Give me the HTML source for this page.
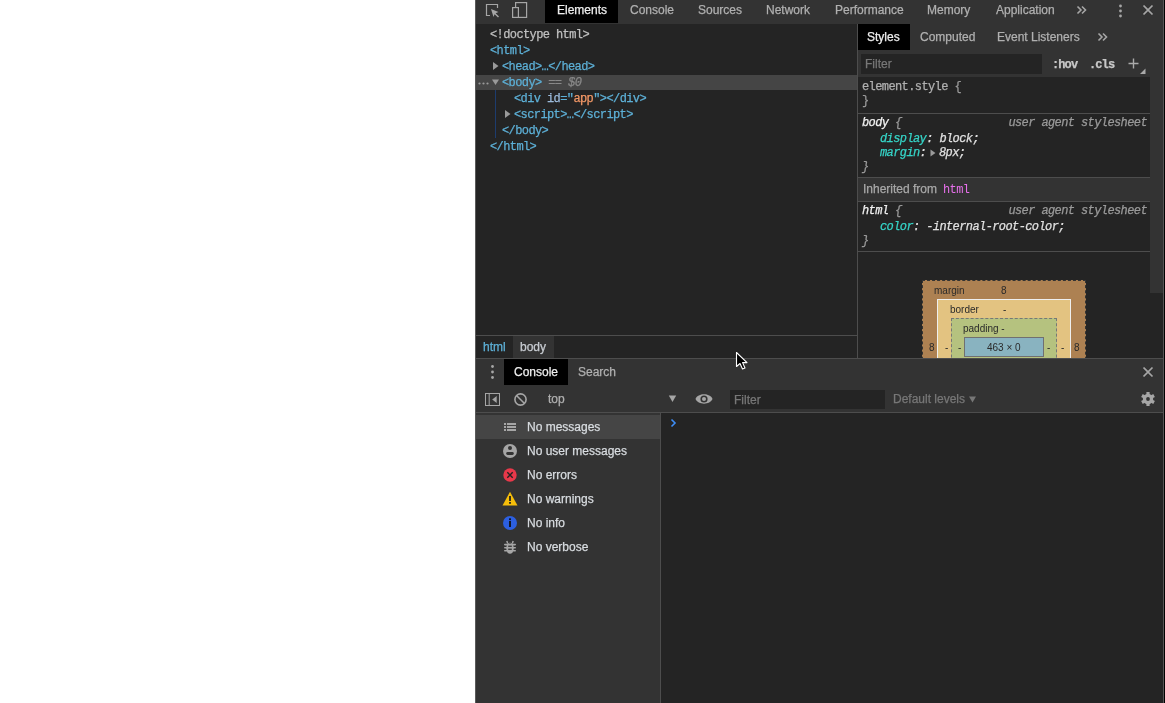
<!DOCTYPE html>
<html><head><meta charset="utf-8">
<style>
*{box-sizing:border-box;margin:0;padding:0}
html,body{width:1165px;height:703px;overflow:hidden;background:#fff;font-family:"Liberation Sans",sans-serif;font-size:12px}
div{position:absolute}
span{position:static}
#w{-webkit-text-stroke-width:0.25px}
.bg{background:#242424}
.tb{background:#333}
.ln{background:#4d4d4d}
.t{white-space:pre;line-height:14px;height:14px}
.tab{color:#b0b0b0;white-space:pre;line-height:14px}
.sel{background:#000}
.mono{font-family:"Liberation Mono",monospace;font-size:12px;letter-spacing:-0.6px}
.tag{color:#5db0d7}
.an{color:#9bbbdc}
.av{color:#f29766}
.gr{color:#c0c0c0}
.it{font-style:italic}
.pn{color:#35d4c7}
.pv{color:#e0e0e0}
.brace{color:#9a9a9a}
.ua{color:#9a9a9a;font-style:italic}
.bm{font-size:10px;color:#2a2a2a;line-height:12px;white-space:pre;-webkit-text-stroke-width:0}
</style></head><body>
<div id="w" style="left:0;top:0;width:1165px;height:703px;will-change:transform">
<!-- devtools container -->
<div style="left:475px;top:0;width:1px;height:703px;background:#5a5a5a"></div>
<div class="bg" style="left:476px;top:0;width:689px;height:703px"></div>

<!-- ===== main toolbar ===== -->
<div class="tb" style="left:476px;top:0;width:689px;height:24px"></div>
<svg style="position:absolute;left:476px;top:0" width="60" height="24">
  <path d="M14,15.5 H10.5 V4.5 H21.5 V8" fill="none" stroke="#a6a6a6" stroke-width="1.2"/>
  <path d="M15,9 L22.5,12 L19.6,13.3 L23,16.5 L22,17.5 L18.6,14.2 L17.5,17 Z" fill="#a6a6a6"/>
  <rect x="39.6" y="2.6" width="11" height="14.8" fill="none" stroke="#a6a6a6" stroke-width="1.2"/>
  <rect x="36.6" y="7.6" width="5.8" height="9.8" fill="#333" stroke="#a6a6a6" stroke-width="1.2"/>
</svg>
<div class="sel" style="left:545px;top:0;width:73px;height:23px"></div>
<div class="tab" style="left:557px;top:3px;color:#eee">Elements</div>
<div class="tab" style="left:630px;top:3px">Console</div>
<div class="tab" style="left:698px;top:3px">Sources</div>
<div class="tab" style="left:766px;top:3px">Network</div>
<div class="tab" style="left:835px;top:3px">Performance</div>
<div class="tab" style="left:927px;top:3px">Memory</div>
<div class="tab" style="left:996px;top:3px">Application</div>
<svg style="position:absolute;left:1074px;top:3px" width="16" height="16"><path d="M3.5,3.5 L7,7 L3.5,10.5 M8,3.5 L11.5,7 L8,10.5" fill="none" stroke="#a6a6a6" stroke-width="1.6"/></svg>
<svg style="position:absolute;left:1110px;top:0" width="55" height="24">
  <circle cx="10.5" cy="6" r="1.4" fill="#a6a6a6"/><circle cx="10.5" cy="11" r="1.4" fill="#a6a6a6"/><circle cx="10.5" cy="16" r="1.4" fill="#a6a6a6"/>
  <path d="M33.5,5.5 L42.5,14.5 M42.5,5.5 L33.5,14.5" stroke="#a6a6a6" stroke-width="1.7"/>
</svg>

<!-- ===== elements panel ===== -->
<div class="mono" style="left:476px;top:24px;width:381px;height:311px">
  <div style="left:0;top:51px;width:381px;height:15px;background:#454545"></div>
  <div class="t gr" style="left:14px;top:4px">&lt;!doctype html&gt;</div>
  <div class="t tag" style="left:14px;top:20px">&lt;html&gt;</div>
  <div class="t tag" style="left:26px;top:36px">&lt;head&gt;…&lt;/head&gt;</div>
  <div class="t tag" style="left:26px;top:52px">&lt;body&gt; <span style="color:#8a8a8a">== <i>$0</i></span></div>
  <div class="t tag" style="left:38px;top:68px">&lt;div <span class="an">id</span>="<span class="av">app</span>"&gt;&lt;/div&gt;</div>
  <div class="t tag" style="left:38px;top:84px">&lt;script&gt;…&lt;/script&gt;</div>
  <div class="t tag" style="left:26px;top:100px">&lt;/body&gt;</div>
  <div class="t tag" style="left:14px;top:116px">&lt;/html&gt;</div>
  <div style="left:19px;top:66px;width:1px;height:48px;background:#1d3c6e"></div>
  <svg style="position:absolute;left:0;top:0" width="40" height="120">
    <path d="M17,38 L22.5,42 L17,46 Z" fill="#9a9a9a"/>
    <path d="M16,55.5 L23,55.5 L19.5,61 Z" fill="#9a9a9a"/>
    <path d="M29,86 L34.5,90 L29,94 Z" fill="#9a9a9a"/>
    <circle cx="3.5" cy="59.5" r="1.1" fill="#9a9a9a"/><circle cx="7.5" cy="59.5" r="1.1" fill="#9a9a9a"/><circle cx="11.5" cy="59.5" r="1.1" fill="#9a9a9a"/>
  </svg>
</div>

<!-- breadcrumbs -->
<div class="ln" style="left:476px;top:335px;width:381px;height:1px"></div>
<div style="left:513px;top:336px;width:41px;height:22px;background:#333"></div>
<div class="t" style="left:483px;top:340px;color:#5db0d7">html</div>
<div class="t" style="left:520px;top:340px;color:#c8ccd2">body</div>

<!-- vertical divider -->
<div class="ln" style="left:857px;top:24px;width:1px;height:334px"></div>

<!-- ===== styles sidebar ===== -->
<div class="tb" style="left:858px;top:24px;width:307px;height:53px"></div>
<div class="sel" style="left:858px;top:24px;width:52px;height:26px"></div>
<div class="tab" style="left:867px;top:30px;color:#eee">Styles</div>
<div class="tab" style="left:920px;top:30px">Computed</div>
<div class="tab" style="left:997px;top:30px">Event Listeners</div>
<svg style="position:absolute;left:1095px;top:30px" width="16" height="16"><path d="M3.5,3.5 L7,7 L3.5,10.5 M8,3.5 L11.5,7 L8,10.5" fill="none" stroke="#a6a6a6" stroke-width="1.6"/></svg>
<div style="left:861px;top:54px;width:181px;height:20px;background:#242424"></div>
<div class="t" style="left:865px;top:57px;color:#777">Filter</div>
<div class="t mono" style="left:1052px;top:58px;color:#c8c8c8;font-weight:bold;font-size:12px;letter-spacing:-0.9px">:hov</div>
<div class="t mono" style="left:1089px;top:58px;color:#c8c8c8;font-weight:bold;font-size:12px;letter-spacing:-0.9px">.cls</div>
<svg style="position:absolute;left:1124px;top:54px" width="26" height="22">
  <path d="M9.5,4.5 V14.5 M4.5,9.5 H14.5" stroke="#aaa" stroke-width="1.4"/>
  <path d="M21.5,20 L21.5,14.5 L16,20 Z" fill="#aaa"/>
</svg>

<!-- scrollbar -->
<div style="left:1150px;top:77px;width:13px;height:216px;background:#333"></div>


<!-- section element.style -->
<div class="mono" style="left:858px;top:77px;width:292px;height:200px">
  <div class="t" style="left:4px;top:3px;color:#b0b0b0">element.style <span class="brace">{</span></div>
  <div class="t brace" style="left:4px;top:17px">}</div>
</div>
<div class="ln" style="left:858px;top:113px;width:292px;height:1px"></div>
<div class="mono" style="left:858px;top:114px;width:292px;height:63px">
  <div class="t" style="left:4px;top:2px;color:#f0f0f0;font-style:italic">body <span class="brace">{</span></div>
  <div class="t ua" style="right:3px;top:2px">user agent stylesheet</div>
  <div class="t it" style="left:22px;top:18px"><span class="pn">display</span><span class="pv">: block;</span></div>
  <div class="t it" style="left:22px;top:32px"><span class="pn">margin</span><span class="pv">:</span></div>
  <div class="t brace it" style="left:4px;top:46px">}</div>
  <svg style="position:absolute;left:72px;top:34px" width="8" height="10"><path d="M0.5,1.5 L5.5,5 L0.5,8.5 Z" fill="#9a9a9a"/></svg>
  <div class="t it pv" style="left:81px;top:32px">8px;</div>
</div>
<div class="ln" style="left:858px;top:177px;width:292px;height:1px"></div>
<div class="tb" style="left:858px;top:178px;width:292px;height:23px"></div>
<div class="t" style="left:863px;top:182px;color:#a8a8a8">Inherited from</div>
<div class="t mono" style="left:943px;top:183px;color:#e870ec;-webkit-text-stroke-width:0">html</div>
<div class="ln" style="left:858px;top:201px;width:292px;height:1px"></div>
<div class="mono" style="left:858px;top:202px;width:292px;height:49px">
  <div class="t" style="left:4px;top:2px;color:#f0f0f0;font-style:italic">html <span class="brace">{</span></div>
  <div class="t ua" style="right:3px;top:2px">user agent stylesheet</div>
  <div class="t it" style="left:22px;top:18px"><span class="pn">color</span><span class="pv">: -internal-root-color;</span></div>
  <div class="t brace it" style="left:4px;top:32px">}</div>
</div>
<div class="ln" style="left:858px;top:251px;width:292px;height:1px"></div>

<!-- box model -->
<div style="left:922px;top:280px;width:164px;height:90px;background:#ad8152;border:1px dashed #333"></div>
<div style="left:937px;top:299px;width:134px;height:70px;background:#e3c381;border:1px solid #eee"></div>
<div style="left:951px;top:318px;width:106px;height:50px;background:#b5c27f;border:1px dashed #777"></div>
<div style="left:964px;top:337px;width:80px;height:20px;background:#89b3c0;border:1px solid #707070"></div>
<div class="bm" style="left:934px;top:285px">margin</div>
<div class="bm" style="left:1001px;top:285px">8</div>
<div class="bm" style="left:950px;top:304px">border</div>
<div class="bm" style="left:1003px;top:304px">-</div>
<div class="bm" style="left:963px;top:323px">padding -</div>
<div class="bm" style="left:987px;top:342px">463 × 0</div>
<div class="bm" style="left:929px;top:342px">8</div>
<div class="bm" style="left:945px;top:342px">-</div>
<div class="bm" style="left:958px;top:342px">-</div>
<div class="bm" style="left:1047px;top:342px">-</div>
<div class="bm" style="left:1061px;top:342px">-</div>
<div class="bm" style="left:1074px;top:342px">8</div>

<!-- ===== drawer ===== -->
<div class="tb" style="left:476px;top:358px;width:689px;height:54px"></div>
<div class="ln" style="left:476px;top:358px;width:689px;height:1px"></div>
<svg style="position:absolute;left:476px;top:359px" width="30" height="26">
  <circle cx="16.5" cy="7.5" r="1.4" fill="#a6a6a6"/><circle cx="16.5" cy="13" r="1.4" fill="#a6a6a6"/><circle cx="16.5" cy="18.5" r="1.4" fill="#a6a6a6"/>
</svg>
<div class="sel" style="left:504px;top:359px;width:64px;height:26px"></div>
<div class="tab" style="left:514px;top:365px;color:#eee">Console</div>
<div class="tab" style="left:578px;top:365px">Search</div>
<svg style="position:absolute;left:1135px;top:359px" width="30" height="26">
  <path d="M8.5,8.5 L17.5,17.5 M17.5,8.5 L8.5,17.5" stroke="#a6a6a6" stroke-width="1.7"/>
</svg>

<!-- console toolbar -->

<svg style="position:absolute;left:476px;top:386px" width="200" height="26">
  <rect x="9.5" y="7.5" width="14" height="12" fill="none" stroke="#a6a6a6" stroke-width="1"/>
  <path d="M13.2,7.5 V19.5" stroke="#a6a6a6" stroke-width="1"/>
  <path d="M20.7,10 L20.7,17 L16.2,13.5 Z" fill="#a6a6a6"/>
  <circle cx="44.5" cy="13.5" r="5.6" fill="none" stroke="#a6a6a6" stroke-width="1.6"/>
  <path d="M40.5,9.5 L48.5,17.5" stroke="#a6a6a6" stroke-width="1.6"/>
</svg>
<div class="tab" style="left:548px;top:392px">top</div>
<svg style="position:absolute;left:668px;top:394px" width="10" height="10"><path d="M0.8,1.5 L8.2,1.5 L4.5,8 Z" fill="#a6a6a6"/></svg>
<svg style="position:absolute;left:694px;top:390px" width="22" height="18">
  <path d="M1.5,9 C4,2.8 16,2.8 18.5,9 C16,15.2 4,15.2 1.5,9 Z" fill="#a6a6a6"/>
  <circle cx="10" cy="9" r="3.6" fill="#333"/><circle cx="10" cy="9" r="2" fill="#a6a6a6"/>
</svg>
<div style="left:730px;top:390px;width:155px;height:19px;background:#242424"></div>
<div class="t" style="left:734px;top:393px;color:#777">Filter</div>
<div class="t" style="left:893px;top:392px;color:#777">Default levels</div>
<svg style="position:absolute;left:968px;top:395px" width="10" height="10"><path d="M1,1.5 L8,1.5 L4.5,7.5 Z" fill="#777"/></svg>
<svg style="position:absolute;left:1136px;top:387px" width="24" height="24"><g fill="#a6a6a6"><rect x="10.4" y="5" width="3.2" height="14" transform="rotate(0 12 12)"/><rect x="10.4" y="5" width="3.2" height="14" transform="rotate(60 12 12)"/><rect x="10.4" y="5" width="3.2" height="14" transform="rotate(120 12 12)"/><circle cx="12" cy="12" r="5.2"/></g><circle cx="12" cy="12" r="1.9" fill="#333"/></svg>
<div class="ln" style="left:476px;top:412px;width:689px;height:1px"></div>

<!-- console sidebar -->
<div class="tb" style="left:476px;top:413px;width:184px;height:290px"></div>
<div class="ln" style="left:660px;top:413px;width:1px;height:290px"></div>
<div style="left:476px;top:415px;width:184px;height:24px;background:#454545"></div>
<div class="t" style="left:527px;top:420px;color:#d8dce0">No messages</div>
<div class="t" style="left:527px;top:444px;color:#d8dce0">No user messages</div>
<div class="t" style="left:527px;top:468px;color:#d8dce0">No errors</div>
<div class="t" style="left:527px;top:492px;color:#d8dce0">No warnings</div>
<div class="t" style="left:527px;top:516px;color:#d8dce0">No info</div>
<div class="t" style="left:527px;top:540px;color:#d8dce0">No verbose</div>
<svg style="position:absolute;left:500px;top:415px" width="22" height="144">
  <!-- list -->
  <g fill="#a6a6a6"><rect x="4" y="8" width="2" height="2"/><rect x="7" y="8" width="9" height="2"/>
  <rect x="4" y="11" width="2" height="2"/><rect x="7" y="11" width="9" height="2"/>
  <rect x="4" y="14" width="2" height="2"/><rect x="7" y="14" width="9" height="2"/></g>
  <!-- user -->
  <circle cx="10" cy="36" r="7" fill="#a6a6a6"/>
  <circle cx="10" cy="33.1" r="2" fill="#333"/>
  <rect x="6.2" y="37.1" width="7.6" height="2.8" rx="1.4" fill="#333"/>
  <!-- error -->
  <circle cx="10" cy="60" r="6.7" fill="#e8384a"/>
  <path d="M7.3,57.3 L12.7,62.7 M12.7,57.3 L7.3,62.7" stroke="#222" stroke-width="1.4"/>
  <!-- warning -->
  <path d="M10,76.8 L17.5,90.5 L2.5,90.5 Z" fill="#f5bd0a"/>
  <rect x="9.1" y="81" width="1.8" height="5" fill="#222"/><rect x="9.1" y="87" width="1.8" height="1.8" fill="#222"/>
  <!-- info -->
  <circle cx="10" cy="108" r="7" fill="#2c5fe0"/>
  <rect x="9.1" y="106" width="1.8" height="6" fill="#111"/><rect x="9.1" y="103.3" width="1.8" height="1.8" fill="#111"/>
  <!-- verbose bug -->
  <g fill="#a6a6a6"><ellipse cx="10" cy="133.2" rx="3.7" ry="5.6"/>
  <rect x="4" y="128.8" width="12" height="1.6" rx="0.8"/><rect x="4" y="131.9" width="12" height="1.6" rx="0.8"/><rect x="4" y="134.9" width="12" height="1.6" rx="0.8"/></g>
  <path d="M7.8,128.5 L6.8,126 M12.2,128.5 L13.2,126" stroke="#a6a6a6" stroke-width="1.5"/>
  <path d="M8.3,127.6 Q10,129 11.7,127.6" stroke="#333" stroke-width="1" fill="none"/>
  <rect x="8.2" y="130.6" width="3.6" height="1.3" fill="#333"/><rect x="8.2" y="133.6" width="3.6" height="1.3" fill="#333"/>
</svg>
<!-- console prompt -->
<svg style="position:absolute;left:668px;top:416px" width="12" height="14">
  <path d="M3.5,3.5 L7,7 L3.5,10.5" fill="none" stroke="#3e8ef7" stroke-width="1.6"/>
</svg>

<div style="left:1163px;top:0;width:1px;height:703px;background:#555"></div>
<div style="left:1164px;top:0;width:1px;height:703px;background:#000"></div>
<!-- mouse cursor -->
<svg style="position:absolute;left:735px;top:351px" width="15" height="20">
  <path d="M1.5,1.5 L1.5,15.5 L5,12.5 L7.5,18 L10,17 L7.6,11.6 L12,11.6 Z" fill="#000" stroke="#fff" stroke-width="1.1" stroke-linejoin="round"/>
</svg>
</div>
</body></html>
